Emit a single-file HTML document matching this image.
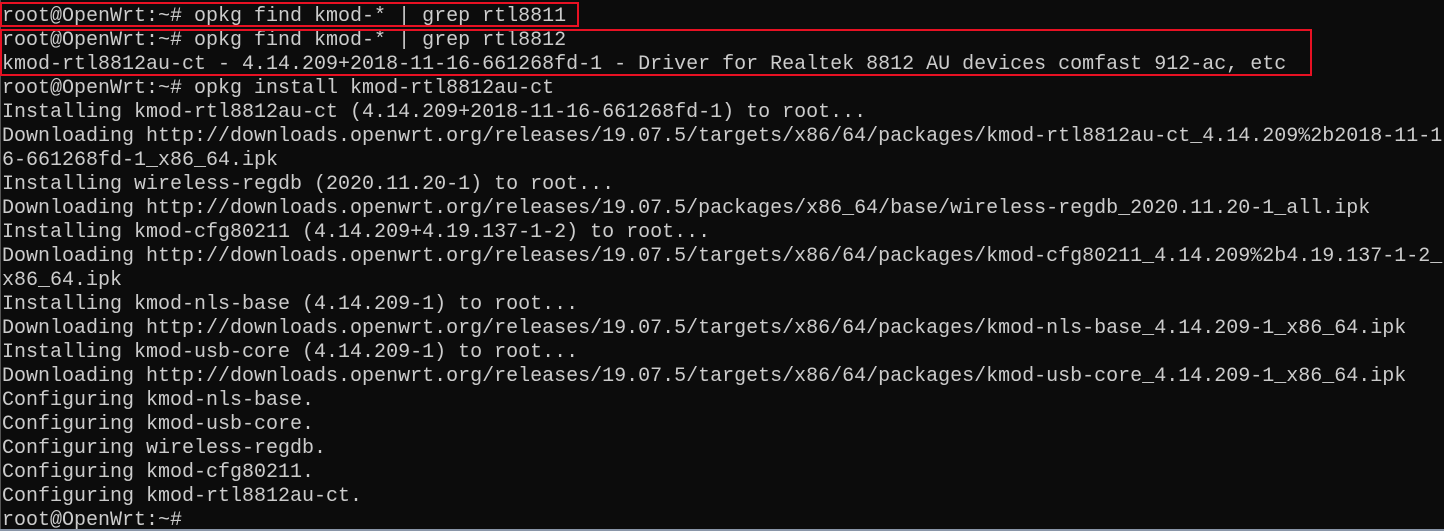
<!DOCTYPE html>
<html><head><meta charset="utf-8"><style>
html,body{margin:0;padding:0;background:#0c0c0c;width:1444px;height:531px;overflow:hidden;position:relative}
pre{position:absolute;left:2px;top:5px;margin:0;font-family:"Liberation Mono","Noto Sans CJK SC",monospace;font-size:20px;line-height:24px;color:#cccccc;white-space:pre}
.box{position:absolute;border:2px solid #e81123;box-sizing:border-box}
.bot{position:absolute;left:0;bottom:0;width:1444px;height:2px;background:#8a96a8}
.lft{position:absolute;left:0;top:0;width:1px;height:531px;background:#555}
</style></head><body>
<div class="lft"></div>
<pre>root@OpenWrt:~# opkg find kmod-* | grep rtl8811
root@OpenWrt:~# opkg find kmod-* | grep rtl8812
kmod-rtl8812au-ct - 4.14.209+2018-11-16-661268fd-1 - Driver for Realtek 8812 AU devices comfast 912-ac, etc
root@OpenWrt:~# opkg install kmod-rtl8812au-ct
Installing kmod-rtl8812au-ct (4.14.209+2018-11-16-661268fd-1) to root...
Downloading http://downloads.openwrt.org/releases/19.07.5/targets/x86/64/packages/kmod-rtl8812au-ct_4.14.209%2b2018-11-1
6-661268fd-1_x86_64.ipk
Installing wireless-regdb (2020.11.20-1) to root...
Downloading http://downloads.openwrt.org/releases/19.07.5/packages/x86_64/base/wireless-regdb_2020.11.20-1_all.ipk
Installing kmod-cfg80211 (4.14.209+4.19.137-1-2) to root...
Downloading http://downloads.openwrt.org/releases/19.07.5/targets/x86/64/packages/kmod-cfg80211_4.14.209%2b4.19.137-1-2_
x86_64.ipk
Installing kmod-nls-base (4.14.209-1) to root...
Downloading http://downloads.openwrt.org/releases/19.07.5/targets/x86/64/packages/kmod-nls-base_4.14.209-1_x86_64.ipk
Installing kmod-usb-core (4.14.209-1) to root...
Downloading http://downloads.openwrt.org/releases/19.07.5/targets/x86/64/packages/kmod-usb-core_4.14.209-1_x86_64.ipk
Configuring kmod-nls-base.
Configuring kmod-usb-core.
Configuring wireless-regdb.
Configuring kmod-cfg80211.
Configuring kmod-rtl8812au-ct.
root@OpenWrt:~#</pre>
<div class="box" style="left:0;top:2px;width:579px;height:25px"></div>
<div class="box" style="left:0;top:29px;width:1312px;height:47px"></div>
<div class="bot"></div>
</body></html>
